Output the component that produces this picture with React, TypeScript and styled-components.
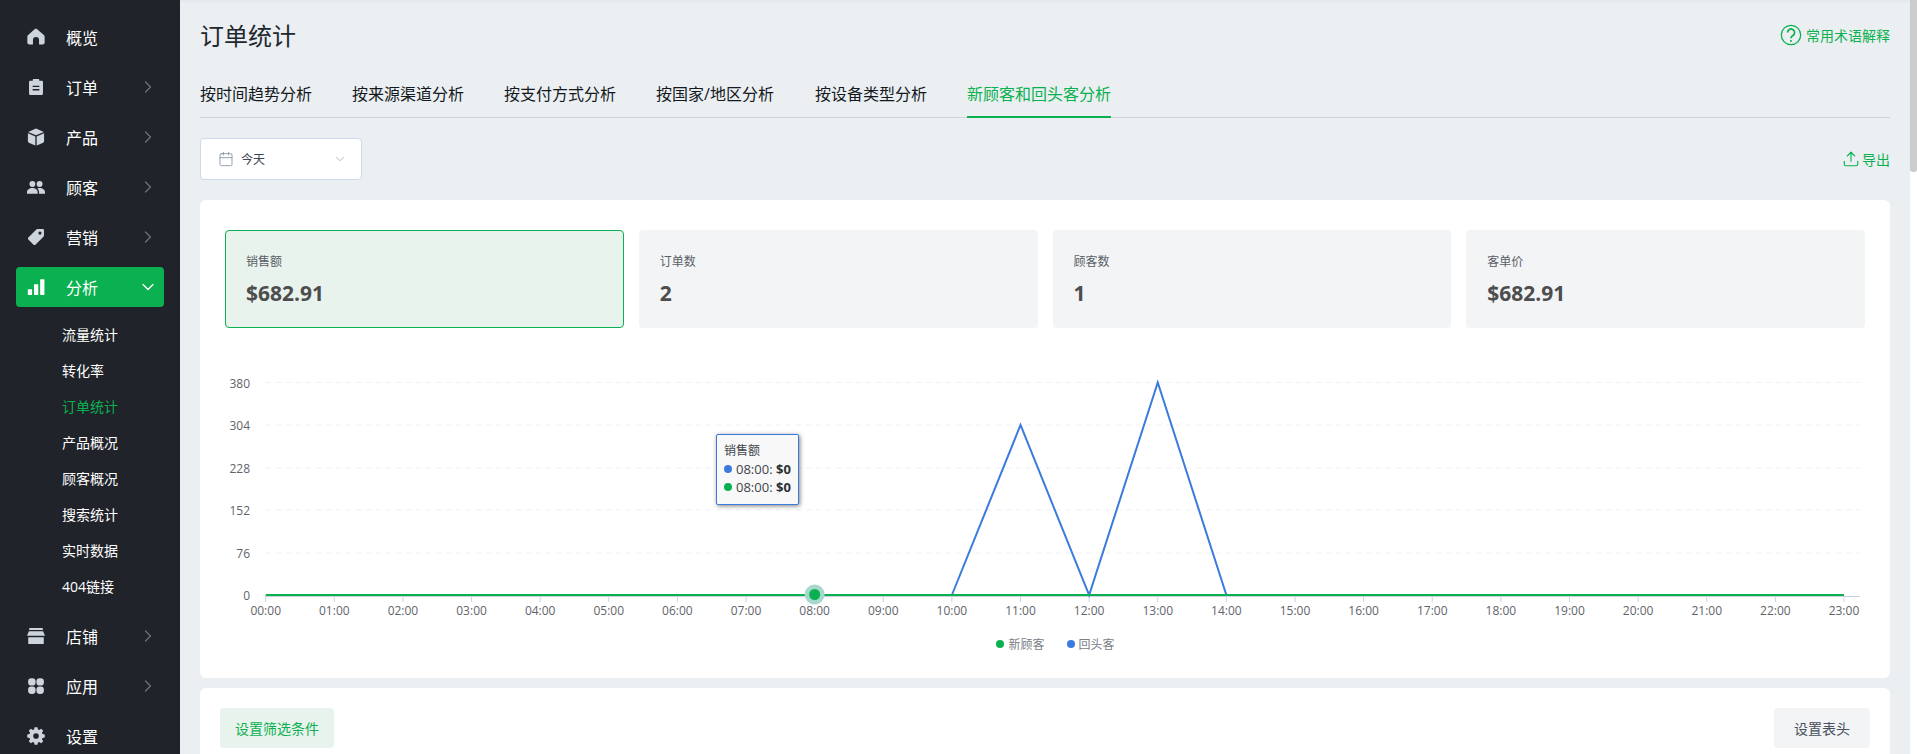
import React from 'react';
import styled, { createGlobalStyle } from 'styled-components';
import { ChevronRight, ChevronDown, Upload, Calendar } from 'lucide-react';

const FONT = `"Open Sans", "Noto Sans CJK SC", sans-serif`;

const Global = createGlobalStyle`
  html, body { margin: 0; padding: 0; height: 100%; overflow: hidden; background: #ebeff2; }
  body { font-family: ${FONT}; }
  #root { height: 100%; }
  * { box-sizing: border-box; }
`;

const Shell = styled.div`
  display: flex;
  width: 1917px;
  height: 754px;
  overflow: hidden;
`;

const Sidebar = styled.nav`
  width: 180px;
  flex: none;
  background: #20242a;
  padding: 12px 16px 0;
  display: flex;
  flex-direction: column;
  overflow: hidden;
`;

const NavItem = styled.div<{ $active?: boolean }>`
  flex: none;
  height: 40px;
  margin: 5px 0;
  padding: 0 6px 0 11px;
  display: flex;
  align-items: center;
  border-radius: 4px;
  background: ${p => (p.$active ? '#0bb150' : 'transparent')};
  color: #ffffff;
  font-size: 16px;
`;

const NavIcon = styled.svg<{ $active?: boolean }>`
  width: 18px;
  height: 18px;
  flex: none;
  margin-right: 21px;
  fill: ${p => (p.$active ? '#ffffff' : '#ced4dc')};
`;

const NavLabel = styled.span`
  flex: 1;
`;

const SubList = styled.div`
  flex: none;
  display: flex;
  flex-direction: column;
  padding: 5px 0 6px;
`;

const SubItem = styled.div<{ $active?: boolean }>`
  height: 36px;
  line-height: 36px;
  padding-left: 46px;
  font-size: 14px;
  color: ${p => (p.$active ? '#0bb150' : '#ffffff')};
`;

const Main = styled.main`
  flex: 1;
  min-width: 0;
  padding: 0 20px;
  background: #ebeff2;
  box-shadow: inset 0 3px 3px -2px #e0e3e6;
  overflow: hidden;
`;

const Header = styled.header`
  height: 70px;
  display: flex;
  align-items: center;
  justify-content: space-between;
`;

const Title = styled.h1`
  margin: -1px 0 0;
  font-size: 24px;
  font-weight: 400;
  color: #22272e;
`;

const GreenLink = styled.a`
  display: inline-flex;
  align-items: center;
  font-size: 14px;
  color: #0bb150;
`;

const HelpIcon = styled.svg`
  width: 24px;
  height: 24px;
  margin-right: 3px;
  fill: none;
  stroke: #0bb150;
  stroke-width: 1.3;
`;

const Tabs = styled.div`
  height: 48px;
  display: flex;
  gap: 40px;
  border-bottom: 1px solid #cfd3d6;
`;

const Tab = styled.div<{ $active?: boolean; $trail?: number }>`
  height: 48px;
  line-height: 48px;
  font-size: 16px;
  padding-right: ${p => p.$trail ?? 0}px;
  color: ${p => (p.$active ? '#0bb150' : '#15191e')};
  border-bottom: ${p => (p.$active ? '2px solid #0bb150' : 'none')};
`;

const Toolbar = styled.div`
  height: 82px;
  display: flex;
  align-items: center;
  justify-content: space-between;
`;

const DateSelect = styled.div`
  width: 162px;
  height: 42px;
  display: flex;
  align-items: center;
  padding: 0 14px 0 17px;
  background: #fff;
  border: 1px solid #ccdaec;
  border-radius: 4px;
  color: #3c4654;
  font-size: 12px;
`;

const DateText = styled.span`
  flex: 1;
  margin-left: 7px;
`;

const Card = styled.section`
  background: #fff;
  border-radius: 6px;
  padding: 30px 25px 20px;
  margin-bottom: 10px;
`;

const StatRow = styled.div`
  display: grid;
  grid-template-columns: repeat(4, 1fr);
  gap: 15px;
`;

const Stat = styled.div<{ $active?: boolean }>`
  height: 98px;
  padding: 23px 20px 0;
  border-radius: 4px;
  background: ${p => (p.$active ? '#e9f3ee' : '#f3f4f6')};
  border: ${p => (p.$active ? '1px solid #0bb150' : '1px solid transparent')};
`;

const StatLabel = styled.div`
  font-size: 12px;
  line-height: 16px;
  color: #5a5f66;
`;

const StatValue = styled.div`
  margin-top: 8px;
  font-size: 21px;
  line-height: 30px;
  font-weight: 700;
  color: #4d4d4d;
`;

const ChartWrap = styled.div`
  position: relative;
  margin-top: 30px;
`;

const ChartSvg = styled.svg`
  display: block;
  width: 1640px;
  height: 272px;
`;

const AxisText = styled.text`
  font-family: ${FONT};
  font-size: 12px;
  fill: #5f646b;
`;

const Tooltip = styled.div`
  position: absolute;
  left: 491px;
  top: 76px;
  width: 83px;
  height: 71px;
  padding: 7px 7px;
  background: #f8f8f8;
  border: 1px solid #3a7bdd;
  border-radius: 2px;
  box-shadow: 1px 1px 4px rgba(0, 0, 0, 0.5);
  font-size: 12px;
  line-height: 18px;
  color: #40454c;
`;

const TipRow = styled.div`
  display: flex;
  align-items: center;
  white-space: nowrap;
  font-size: 13px;
`;

const Dot = styled.i<{ $color: string }>`
  display: block;
  flex: none;
  width: 8px;
  height: 8px;
  border-radius: 50%;
  background: ${p => p.$color};
`;

const TipText = styled.span`
  margin-left: 4px;
  b { font-weight: 700; color: #2c3036; }
`;

const Legend = styled.div`
  height: 28px;
  display: flex;
  align-items: center;
  justify-content: center;
  gap: 22px;
  padding-left: 21px;
  font-size: 12px;
  color: #7b8088;
`;

const LegendItem = styled.div`
  display: flex;
  align-items: center;
  gap: 4px;
`;

const FilterBar = styled.section`
  height: 200px;
  background: #fff;
  border-radius: 6px 6px 0 0;
  padding: 20px;
  display: flex;
  justify-content: space-between;
  align-items: flex-start;
`;

const SoftButton = styled.button<{ $green?: boolean }>`
  height: 40px;
  padding: 0 ${p => (p.$green ? 15 : 20)}px;
  border: none;
  border-radius: 4px;
  font-family: ${FONT};
  font-size: 14px;
  background: ${p => (p.$green ? '#e9f3ee' : '#f2f4f6')};
  color: ${p => (p.$green ? '#0bb150' : '#47505c')};
`;

const ScrollTrack = styled.div`
  width: 7px;
  flex: none;
  background: #ffffff;
`;

const ScrollThumb = styled.div`
  height: 172px;
  background: #cccccc;
  border-radius: 0 0 3px 3px;
`;

const icons: Record<string, React.ReactNode> = {
  home: <path d="M8 .6c.4 0 .7.1 1 .4l6 5.3c.4.4.7.9.7 1.5v5.1c0 1-.8 1.8-1.8 1.800h-3.200V10.700a2.700 2.700 0 0 0-5.400 0v3.900H2.100C1.100 14.600.3 13.800.3 12.800V7.700c0-.6.3-1.100.7-1.500l6-5.300c.3-.3.6-.3 1-.3z" />,
  order: <path fillRule="evenodd" d="M6 .8h4c.5 0 .9.4.9.9v.8h2.200c.6 0 1.100.5 1.100 1.100v10.300c0 .6-.5 1.100-1.100 1.100H2.900c-.6 0-1.100-.5-1.100-1.100V3.600c0-.6.5-1.100 1.100-1.100h2.200v-.8c0-.5.4-.9.9-.9zM5 6.800v1.300h6V6.800H5zm0 3v1.300h6V9.800H5z" />,
  box: <path fillRule="evenodd" d="M8 .5l7 3-7 3-7-3 7-3zM.8 4.600l6.600 2.900v8L1.600 13c-.5-.2-.8-.6-.8-1.200V4.600zm14.400 0v7.200c0 .6-.3 1-.8 1.200l-5.800 2.500v-8l6.600-2.900z" />,
  users: <path d="M4.800 2.600a2.600 2.600 0 0 1 2.600 2.700 2.600 2.600 0 0 1-5.200 0 2.600 2.600 0 0 1 2.600-2.700zm6.400 0a2.600 2.600 0 0 1 2.600 2.700 2.600 2.600 0 0 1-5.200 0 2.600 2.600 0 0 1 2.600-2.700zM4.800 8.900c2.600 0 4.700 1.500 4.700 3.800V14H0v-1.300C0 10.400 2.200 8.900 4.800 8.900zm6.400 0c2.600 0 4.800 1.500 4.800 3.800V14h-5.300v-1.300c0-1.500-.6-2.700-1.500-3.400.6-.3 1.300-.4 2-.4z" />,
  tag: <path fillRule="evenodd" d="M9.500.9h4.500c.6 0 1.100.5 1.100 1.100v4.500c0 .5-.2.9-.5 1.200L7.500 14.800c-.5.5-1.200.5-1.700 0L1.200 10.200c-.5-.5-.5-1.200 0-1.700l7.100-7.100c.3-.3.700-.5 1.200-.5zm2 2.200a1.400 1.400 0 1 0 0 2.800 1.400 1.400 0 0 0 0-2.800z" />,
  bars: <path d="M1.200 10h2.800c.3 0 .5.200.5.500v4c0 .3-.2.500-.5.500H1.200c-.3 0-.5-.2-.5-.500v-4c0-.3.200-.5.500-.5zm5.500-4.500h2.800c.3 0 .5.200.5.500v8.500c0 .3-.2.500-.5.500H6.700c-.3 0-.5-.2-.5-.500V6c0-.3.200-.5.500-.5zM12.200 1h2.800c.3 0 .5.200.5.500v13c0 .3-.2.500-.5.500h-2.800c-.3 0-.5-.2-.5-.500v-13c0-.3.200-.5.500-.5z" />,
  store: <path d="M2 .9h12v1.700H2V.9zM1.700 3.700h12.600L15.800 7v.8H.2V7l1.500-3.300zM1.100 9h13.800v5.700c0 .3-.2.500-.5.500H1.600c-.3 0-.5-.2-.5-.5V9z" />,
  apps: (
    <>
      <rect x="1" y="1" width="6.600" height="6.600" rx="2.800" />
      <rect x="8.400" y="1" width="6.600" height="6.600" rx="2.800" />
      <rect x="1" y="8.400" width="6.600" height="6.600" rx="2.800" />
      <rect x="8.400" y="8.400" width="6.600" height="6.600" rx="2.800" />
    </>
  ),
  gear: <path fillRule="evenodd" d="M6.700.2h2.600l.4 2 1.100.5 1.800-1.100 1.800 1.800-1.100 1.800.5 1.100 2 .4v2.600l-2 .4-.5 1.100 1.100 1.800-1.800 1.800-1.800-1.100-1.100.5-.4 2H6.700l-.4-2-1.100-.5-1.800 1.100-1.800-1.800 1.100-1.800-.5-1.100-2-.4V6.700l2-.4.5-1.100-1.100-1.800 1.800-1.800 1.800 1.100 1.100-.5.4-2zM8 5.500a2.500 2.500 0 1 0 0 5 2.500 2.500 0 0 0 0-5z" />,
};

type Nav = { icon: string; label: string; arrow?: boolean; active?: boolean };

const topNav: Nav[] = [
  { icon: 'home', label: '概览' },
  { icon: 'order', label: '订单', arrow: true },
  { icon: 'box', label: '产品', arrow: true },
  { icon: 'users', label: '顾客', arrow: true },
  { icon: 'tag', label: '营销', arrow: true },
  { icon: 'bars', label: '分析', arrow: true, active: true },
];
const bottomNav: Nav[] = [
  { icon: 'store', label: '店铺', arrow: true },
  { icon: 'apps', label: '应用', arrow: true },
  { icon: 'gear', label: '设置' },
];
const subNav = ['流量统计', '转化率', '订单统计', '产品概况', '顾客概况', '搜索统计', '实时数据', '404链接'];
const tabs = ['按时间趋势分析', '按来源渠道分析', '按支付方式分析', '按国家/地区分析', '按设备类型分析', '新顾客和回头客分析'];
const stats = [
  { label: '销售额', value: '$682.91', active: true },
  { label: '订单数', value: '2' },
  { label: '顾客数', value: '1' },
  { label: '客单价', value: '$682.91' },
];

const NavRow = ({ item }: { item: Nav }) => (
  <NavItem $active={item.active}>
    <NavIcon viewBox="0 0 16 16" $active={item.active}>{icons[item.icon]}</NavIcon>
    <NavLabel>{item.label}</NavLabel>
    {item.active ? (
      <ChevronDown size={20} color="#ffffff" strokeWidth={1.6} />
    ) : item.arrow ? (
      <ChevronRight size={20} color="#6c7178" strokeWidth={1.5} />
    ) : null}
  </NavItem>
);

// chart geometry in svg coordinates (page x - 225, page y - 358)
const X0 = 40.7;
const STEP = 68.62;
const xAt = (i: number) => X0 + STEP * i;
const BASE = 237;
const yTicks: [string, number][] = [['380', 24.5], ['304', 67], ['228', 110], ['152', 152], ['76', 195]];
const hours = Array.from({ length: 24 }, (_, i) => `${String(i).padStart(2, '0')}:00`);
const blueValues: [number, number][] = [[10, BASE], [11, 67], [12, BASE], [13, 24.5], [14, BASE]];

const Chart = () => (
  <ChartSvg viewBox="0 0 1640 272">
    {yTicks.map(([label, y]) => (
      <g key={label}>
        <line x1={41} x2={1634} y1={y} y2={y} stroke="#eef0f4" strokeDasharray="5 5" />
        <AxisText x={25} y={y + 5} textAnchor="end">{label}</AxisText>
      </g>
    ))}
    <AxisText x={25} y={BASE + 5} textAnchor="end">0</AxisText>
    <line x1={40} x2={1635} y1={238.5} y2={238.5} stroke="#c8d2e2" />
    {hours.map((h, i) => (
      <g key={h}>
        <line x1={xAt(i)} x2={xAt(i)} y1={238} y2={244} stroke="#c8d2e2" />
        <AxisText x={xAt(i)} y={256.5} textAnchor="middle">{h}</AxisText>
      </g>
    ))}
    <polyline
      fill="none"
      stroke="#3a7bdd"
      strokeWidth={2}
      points={blueValues.map(([i, y]) => `${xAt(i)},${y}`).join(' ')}
    />
    <line x1={xAt(0)} x2={xAt(23)} y1={BASE} y2={BASE} stroke="#0bb150" strokeWidth={2} />
    <circle cx={xAt(8)} cy={BASE - 0.5} r={10} fill="#a6d9cb" />
    <circle cx={xAt(8)} cy={BASE - 0.5} r={5.5} fill="#0bb150" />
  </ChartSvg>
);

export default function App() {
  return (
    <Shell>
      <Global />
      <Sidebar>
        {topNav.map(n => <NavRow key={n.label} item={n} />)}
        <SubList>
          {subNav.map(s => <SubItem key={s} $active={s === '订单统计'}>{s}</SubItem>)}
        </SubList>
        {bottomNav.map(n => <NavRow key={n.label} item={n} />)}
      </Sidebar>
      <Main>
        <Header>
          <Title>订单统计</Title>
          <GreenLink>
            <HelpIcon viewBox="0 0 24 24">
              <circle cx="12" cy="12" r="9.700" />
              <path strokeWidth="1.7" d="M8.600 9.500a3.500 3.500 0 1 1 5.300 3c-1.200.7-1.900 1.300-1.900 2.800" />
              <circle cx="12" cy="18" r="1" fill="#0bb150" stroke="none" />
            </HelpIcon>
            常用术语解释
          </GreenLink>
        </Header>
        <Tabs>
          {tabs.map((t, i) => (
            <Tab key={t} $active={i === tabs.length - 1} $trail={t.includes('/') ? 1 : 0}>{t}</Tab>
          ))}
        </Tabs>
        <Toolbar>
          <DateSelect>
            <Calendar size={16} color="#7c8b9e" strokeWidth={1.2} />
            <DateText>今天</DateText>
            <ChevronDown size={14} color="#a6afba" strokeWidth={1.5} />
          </DateSelect>
          <GreenLink>
            <Upload size={18} strokeWidth={1.5} style={{ marginRight: 2 }} />
            导出
          </GreenLink>
        </Toolbar>
        <Card>
          <StatRow>
            {stats.map(s => (
              <Stat key={s.label} $active={s.active}>
                <StatLabel>{s.label}</StatLabel>
                <StatValue>{s.value}</StatValue>
              </Stat>
            ))}
          </StatRow>
          <ChartWrap>
            <Chart />
            <Tooltip>
              销售额
              <TipRow><Dot $color="#3a7bdd" /><TipText>08:00: <b>$0</b></TipText></TipRow>
              <TipRow><Dot $color="#0bb150" /><TipText>08:00: <b>$0</b></TipText></TipRow>
            </Tooltip>
            <Legend>
              <LegendItem><Dot $color="#0bb150" />新顾客</LegendItem>
              <LegendItem><Dot $color="#3a7bdd" />回头客</LegendItem>
            </Legend>
          </ChartWrap>
        </Card>
        <FilterBar>
          <SoftButton $green>设置筛选条件</SoftButton>
          <SoftButton>设置表头</SoftButton>
        </FilterBar>
      </Main>
      <ScrollTrack><ScrollThumb /></ScrollTrack>
    </Shell>
  );
}
